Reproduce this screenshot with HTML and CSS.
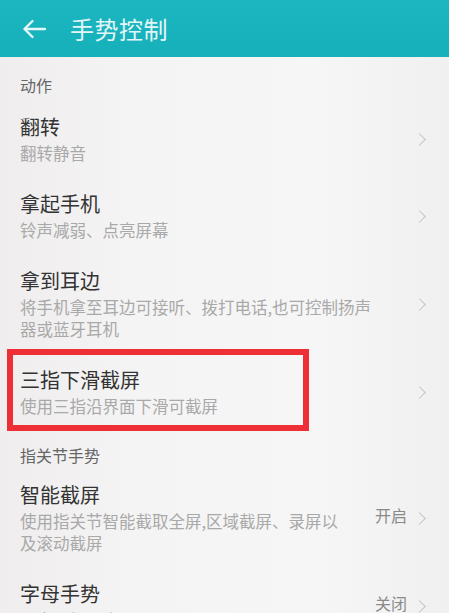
FILE: index.html
```html
<!DOCTYPE html>
<html lang="zh-CN">
<head>
<meta charset="utf-8">
<link rel="stylesheet" href="styles.css">
</head>
<body>
<div class="screen">
  <header class="appbar">
    <svg class="back" width="24" height="20" viewBox="0 0 24 20">
      <path d="M23 10H2.5M10.5 2L2.5 10l8 8" fill="none" stroke="#e6f7f8" stroke-width="2.4" stroke-linecap="round" stroke-linejoin="round"/>
    </svg>
    <h1 class="title">手势控制</h1>
  </header>

  <div class="section first">动作</div>

  <div class="item">
    <div class="text">
      <div class="name">翻转</div>
      <div class="desc">翻转静音</div>
    </div>
    <span class="chev"></span>
  </div>

  <div class="item">
    <div class="text">
      <div class="name">拿起手机</div>
      <div class="desc">铃声减弱、点亮屏幕</div>
    </div>
    <span class="chev"></span>
  </div>

  <div class="item">
    <div class="text">
      <div class="name">拿到耳边</div>
      <div class="desc">将手机拿至耳边可接听、拨打电话,也可控制扬声器或蓝牙耳机</div>
    </div>
    <span class="chev"></span>
  </div>

  <div class="item marked">
    <div class="text">
      <div class="name">三指下滑截屏</div>
      <div class="desc">使用三指沿界面下滑可截屏</div>
    </div>
    <span class="chev"></span>
    <div class="redbox"></div>
  </div>

  <div class="section second">指关节手势</div>

  <div class="item has-value">
    <div class="text">
      <div class="name">智能截屏</div>
      <div class="desc">使用指关节智能截取全屏,区域截屏、录屏以及滚动截屏</div>
    </div>
    <span class="value">开启</span>
    <span class="chev"></span>
  </div>

  <div class="item has-value">
    <div class="text">
      <div class="name">字母手势</div>
      <div class="desc">画字母打开应用</div>
    </div>
    <span class="value">关闭</span>
    <span class="chev"></span>
  </div>
</div>
</body>
</html>
```

FILE: styles.css
```css
* { box-sizing: border-box; }
html, body { margin: 0; padding: 0; }
body {
  width: 449px;
  height: 613px;
  overflow: hidden;
  background: #f3f3f3;
  font-family: "Noto Sans CJK SC", "Noto Sans", sans-serif;
}
.screen {
  width: 449px;
  height: 613px;
  overflow: hidden;
  background: linear-gradient(90deg, #efeded 0%, #f5f4f4 30%, #f6f6f6 70%, #f0f0f0 100%);
}
.appbar {
  height: 57px;
  background: linear-gradient(180deg, #1bb6c0 0%, #16b0bb 100%);
  display: flex;
  align-items: center;
  padding-left: 22px;
}
.back { display: block; margin-top: 1px; }
.title {
  margin: 0 0 0 24px;
  font-size: 24px;
  font-weight: 400;
  line-height: 30px;
  color: #e3f6f7;
  letter-spacing: 0.5px;
}
.section {
  padding: 17px 20px 5px;
  font-size: 16px;
  line-height: 18px;
  color: #666;
}
.section.first { padding-top: 19px; padding-bottom: 7px; }
.section.second { padding-top: 15px; }
.item {
  position: relative;
  display: flex;
  align-items: center;
  padding: 11px 0 14px 20px;
}
.text { flex: 1; min-width: 0; padding-right: 30px; }
.has-value .text { padding-right: 22px; }
.name {
  font-size: 20px;
  line-height: 30px;
  color: #333;
}
.desc {
  font-size: 16.5px;
  line-height: 22px;
  color: #a9a9a9;
}
.value {
  font-size: 16px;
  color: #8a8a8a;
  white-space: nowrap;
  margin-top: -4px;
  margin-right: 8px;
}
.chev {
  flex: none;
  width: 9px;
  height: 9px;
  border-top: 1.6px solid #c4c4c4;
  border-right: 1.6px solid #c4c4c4;
  transform: rotate(45deg);
  margin-right: 25px;
  margin-top: 2px;
}
.redbox {
  position: absolute;
  left: 7px;
  top: -5px;
  width: 302px;
  height: 82px;
  border: 6px solid #ee3036;
  pointer-events: none;
}
```
